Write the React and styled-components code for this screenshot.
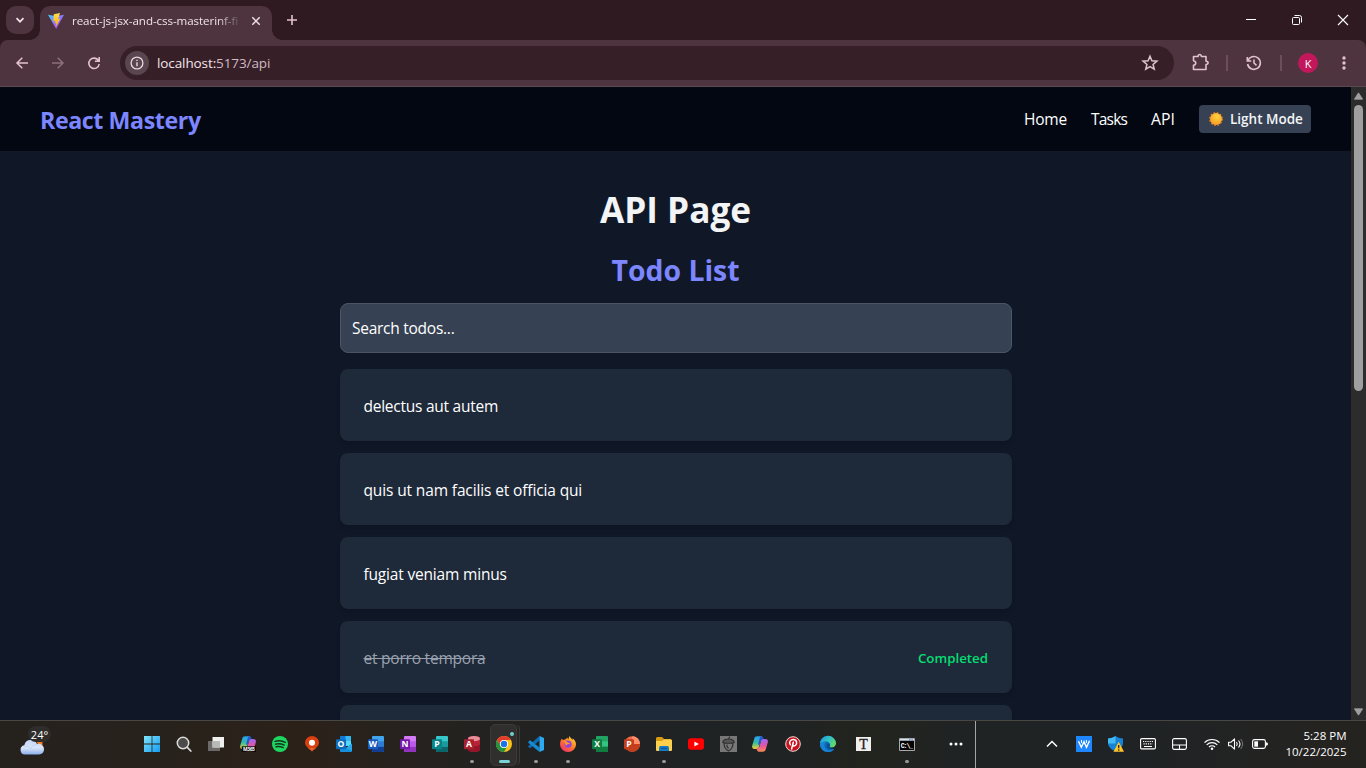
import React from "react";
import styled, { createGlobalStyle } from "styled-components";

const Global = createGlobalStyle`
  *{box-sizing:border-box}
  html,body,#root{margin:0;height:100%;overflow:hidden}
  body{font-family:"Open Sans","Noto Sans",sans-serif;background:#101828;color:#f3f4f6}
  svg{display:block;flex:none;overflow:visible}
`;

const Screen = styled.div`
  display: flex;
  flex-direction: column;
  width: 1366px;
  height: 768px;
`;

/* Text whose advance is tuned per label */
const Label = styled.span`
  display: block;
  white-space: nowrap;
  font-size: ${(p) => p.$size || 15.5}px;
  font-weight: ${(p) => p.$weight || 400};
  letter-spacing: ${(p) => p.$track || 0}px;
  color: ${(p) => p.$color || "inherit"};
`;

/* ---------- browser ---------- */
const TabStrip = styled.div`
  height: 40px;
  flex: none;
  display: flex;
  background: #2f1a22;
`;
const TabSearch = styled.div`
  width: 28px;
  height: 28px;
  margin: 6px 6px 0;
  border-radius: 10px;
  background: #4e343e;
  display: grid;
  place-items: center;
`;
const Tab = styled.div`
  position: relative;
  width: 232px;
  height: 34px;
  margin-top: 6px;
  padding: 0 10px 5px 8px;
  border-radius: 10px 10px 0 0;
  background: #4e343e;
  display: flex;
  align-items: center;
  &::before,
  &::after {
    content: "";
    position: absolute;
    bottom: 0;
    width: 10px;
    height: 10px;
  }
  &::before {
    left: -10px;
    background: radial-gradient(circle at 0 0, transparent 9.5px, #4e343e 10px);
  }
  &::after {
    right: -10px;
    background: radial-gradient(circle at 100% 0, transparent 9.5px, #4e343e 10px);
  }
`;
const TabTitle = styled.div`
  width: 168px;
  margin-left: 8px;
  margin-right: 10px;
  mask-image: linear-gradient(90deg, #000 145px, transparent 170px);
`;
const NewTab = styled.div`
  width: 40px;
  display: grid;
  place-items: center;
`;
const WindowButtons = styled.div`
  margin-left: auto;
  display: flex;
`;
const WindowButton = styled.div`
  width: 46px;
  display: grid;
  place-items: center;
`;
const Toolbar = styled.div`
  height: 47px;
  flex: none;
  display: flex;
  align-items: center;
  background: #4e343e;
  border-bottom: 1px solid #5c4850;
  border-radius: 8px 8px 0 0;
`;
const ToolbarWrap = styled.div`
  background: #2f1a22;
  flex: none;
`;
const ToolButton = styled.div`
  width: ${(p) => p.$w || 36}px;
  display: grid;
  place-items: center;
  opacity: ${(p) => (p.$dim ? 0.42 : 1)};
`;
const Omnibox = styled.div`
  width: 1054px;
  height: 34px;
  margin-left: 4px;
  border-radius: 17px;
  background: #371f28;
  display: flex;
  align-items: center;
  padding: 0 14px 0 5px;
  justify-content: space-between;
`;
const Address = styled.div`
  display: flex;
  align-items: center;
  gap: 8px;
`;
const Muted = styled.span`
  color: #cfbac2;
`;
const InfoChip = styled.div`
  width: 24px;
  height: 24px;
  border-radius: 50%;
  background: #5a464e;
  display: grid;
  place-items: center;
`;
const Separator = styled.div`
  width: 2px;
  height: 16px;
  background: #6d4f5a;
`;
const Avatar = styled.div`
  width: 20px;
  height: 20px;
  border-radius: 50%;
  background: #c2185b;
  color: #fff;
  font: 11px "Open Sans", sans-serif;
  display: grid;
  place-items: center;
`;

/* ---------- page ---------- */
const Viewport = styled.div`
  height: 633px;
  flex: none;
  display: flex;
  overflow: hidden;
`;
const Page = styled.main`
  width: 1351px;
  height: 633px;
  overflow: hidden;
  background: #101828;
`;
const Nav = styled.nav`
  height: 64px;
  padding: 0 40px;
  display: flex;
  align-items: center;
  justify-content: space-between;
  background: #030712;
`;
const Brand = styled(Label)`
  padding-top: 1px;
`;
const NavLinks = styled.div`
  display: flex;
  align-items: center;
  gap: 24px;
`;
const Link = styled.div`
  width: ${(p) => p.$w}px;
  color: #fff;
`;
const ThemeButton = styled.div`
  width: 112px;
  height: 28px;
  padding-left: 10px;
  display: flex;
  align-items: center;
  gap: 7px;
  border-radius: 4px;
  background: #364153;
`;
const Content = styled.section`
  width: 671px;
  margin: 0 auto;
  padding-top: 31px;
  display: flex;
  flex-direction: column;
`;
const Heading = styled.div`
  height: ${(p) => p.$h}px;
  margin-bottom: ${(p) => p.$mb}px;
  display: flex;
  align-items: center;
  justify-content: center;
`;
const SearchBox = styled.div`
  width: 672px;
  height: 50px;
  flex: none;
  margin-bottom: 16px;
  padding: 0 12px 0 11px;
  display: flex;
  align-items: center;
  border: 1px solid #4a5565;
  border-radius: 8px;
  background: #364153;
  color: #fff;
`;
const TodoList = styled.div`
  width: 672px;
  display: flex;
  flex-direction: column;
  gap: 12px;
  color: #fff;
`;
const TodoCard = styled.div`
  height: 72px;
  flex: none;
  padding: 1px 24px 0 23.5px;
  display: flex;
  align-items: center;
  justify-content: space-between;
  border-radius: 8px;
  background: #1e2939;
  box-shadow: 0 4px 6px -1px rgba(0, 0, 0, 0.1), 0 2px 4px -2px rgba(0, 0, 0, 0.1);
`;
const DoneLabel = styled(Label)`
  text-decoration: line-through;
  text-decoration-thickness: 1px;
`;
const Scrollbar = styled.div`
  width: 15px;
  padding: 5px 0 4px;
  display: flex;
  flex-direction: column;
  align-items: center;
  background: #2c2c2c;
`;
const Thumb = styled.div`
  width: 9px;
  height: 286px;
  margin-top: 5px;
  margin-bottom: auto;
  border-radius: 5px;
  background: #9f9f9f;
`;

/* ---------- taskbar ---------- */
const Taskbar = styled.footer`
  height: 48px;
  flex: none;
  display: flex;
  border-top: 1px solid #484744;
  background: linear-gradient(90deg, #25211d 0, #27221c 150px, #2b2119 300px, #25221f 430px, #202224 620px, #1f2324 780px, #22241d 870px, #202324 960px, #202325 1150px, #25231f 1366px);
`;
const Weather = styled.div`
  position: relative;
  width: 136px;
`;
const Cloud = styled.div`
  position: absolute;
  left: 20px;
  top: 18px;
`;
const Temp = styled.div`
  position: absolute;
  left: 28px;
  top: 5px;
  width: 23px;
  height: 16px;
  border-radius: 8px;
  background: #2e2d2b;
  display: grid;
  place-items: center;
`;
const Slot = styled.div`
  position: relative;
  width: ${(p) => p.$w || 32}px;
  padding-bottom: 1px;
  flex: none;
  display: grid;
  place-items: center;
`;
const MoreSlot = styled(Slot)`
  padding-left: 17px;
  justify-items: start;
`;
const ActiveTile = styled(Slot)`
  &::before {
    content: "";
    position: absolute;
    left: 2px;
    top: 3px;
    width: 25px;
    height: 40px;
    border-radius: 5px;
    border: 1px solid #3c3a38;
    background: #312f2d;
    box-shadow: 3px 0 0 -1px #272523, 4px 0 0 -1px #3c3a38;
  }
  &::after {
    content: "";
    position: absolute;
    left: 22px;
    top: 11px;
    width: 4px;
    height: 4px;
    border-radius: 50%;
    background: #70cfd3;
  }
  & > svg {
    position: relative;
  }
`;
const Indicator = styled.i`
  position: absolute;
  bottom: 5px;
  left: calc(50% - ${(p) => (p.$active ? 5 : 2)}px);
  width: ${(p) => (p.$active ? 11 : 4)}px;
  height: 3px;
  border-radius: 2px;
  background: ${(p) => (p.$active ? "#79d2d6" : "#9a9896")};
`;
const Divider = styled.div`
  width: 1px;
  background: #a5a5a4;
`;
const Tray = styled.div`
  display: flex;
  flex: 1;
  padding-left: 58px;
`;
const Clock = styled.div`
  margin-left: auto;
  padding: 7px 19.5px 0 0;
  display: flex;
  flex-direction: column;
  align-items: flex-end;
  line-height: 16px;
`;

function Icon({ s = 16, h, vb, children, ...rest }) {
  return (
    <svg width={s} height={h || s} viewBox={vb || `0 0 ${s} ${h || s}`} fill="none" {...rest}>
      {children}
    </svg>
  );
}
const pink = "#e3c1cd";

const ViteLogo = () => (
  <Icon>
    <defs>
      <linearGradient id="va" x1="0" y1="0" x2="1" y2="1">
        <stop stopColor="#41d1ff" />
        <stop offset=".7" stopColor="#a852fe" />
        <stop offset="1" stopColor="#bd34fe" />
      </linearGradient>
      <linearGradient id="vb" x1="0" y1="0" x2="0" y2="1">
        <stop stopColor="#ffdf50" />
        <stop offset="1" stopColor="#ffa800" />
      </linearGradient>
    </defs>
    <path d="M0 1.700 8 3.200l8-1.500L8.200 16Z" fill="url(#va)" />
    <path d="m12 0-6.200 1.200L5.300 8.300l2.200-.4-.700 2.600 1.400-.4-.6 4.400 4.700-9-2.100.4Z" fill="url(#vb)" />
  </Icon>
);

function OfficeIcon({ letter, back, mid, front, low, round }) {
  return (
    <Icon>
      {round ? (
        <>
          <circle cx="8.200" cy="8" r="7.800" fill={back} />
          <path d="M8.200 8V.2A7.800 7.800 0 0 1 16 8Z" fill={mid} />
          <path d="M.4 8H16A7.800 7.800 0 0 1 8.200 15.800 7.800 7.800 0 0 1 .4 8Z" fill={low} />
        </>
      ) : (
        <>
          <rect x="4" width="12" height="16" rx="1" fill={back} />
          <path d="M4 5.300h12v5.400H4Z" fill={mid} />
          <path d="M4 10.700h12V15q0 1-1 1H5q-1 0-1-1Z" fill={low} />
        </>
      )}
      <rect y="3.200" width="10" height="10" rx="1" fill={front} />
      <text x="5" y="11.300" textAnchor="middle" fill="#fff" fontFamily="Open Sans" fontWeight="700" fontSize="8.600">
        {letter}
      </text>
    </Icon>
  );
}

const AccessIcon = () => (
  <Icon>
    <path d="M4 2.500C4 1 6.500 0 10 0s6 1 6 2.500v11c0 1.500-2.500 2.500-6 2.500s-6-1-6-2.500Z" fill="#b72236" />
    <path d="M4 9c2 1.800 9 2 12-.5v5c0 1.500-2.500 2.500-6 2.500s-6-1-6-2.500Z" fill="#941528" />
    <ellipse cx="10" cy="2.700" rx="6" ry="2.600" fill="#e58f99" />
    <rect y="3.200" width="10" height="10" rx="1" fill="#a9202f" />
    <text x="5" y="11.300" textAnchor="middle" fill="#fff" fontFamily="Open Sans" fontWeight="700" fontSize="8.600">A</text>
  </Icon>
);

const Sun = () => (
  <Icon s={14}>
    <defs>
      <radialGradient id="sun" cx=".6" cy=".3" r=".75">
        <stop stopColor="#ffd23e" />
        <stop offset="1" stopColor="#f59a23" />
      </radialGradient>
    </defs>
    <circle cx="7" cy="7" r="6.300" fill="none" stroke="#e0752a" strokeWidth="1.400" strokeDasharray="1.700 1.600" />
    <circle cx="7" cy="7" r="6" fill="url(#sun)" />
  </Icon>
);

const CloudIcon = () => (
  <Icon s={25} h={16}>
    <defs>
      <linearGradient id="cl" x1="0" y1="0" x2="0" y2="1">
        <stop stopColor="#c4d7f7" />
        <stop offset=".55" stopColor="#d9e5f8" />
        <stop offset="1" stopColor="#8caeea" />
      </linearGradient>
    </defs>
    <path d="M17 3h5.500v3.500h-4Z" fill="#f57c1f" />
    <path d="M5 15.500a4.700 4.700 0 0 1-.7-9.300C5 3 7.200 .8 10.700 .8c3.300 0 5.300 1.700 6.300 4.200 4-.8 7 2 7 5.300 0 3-2 5.200-5 5.200Z" fill="url(#cl)" />
    <path d="M4.500 7.500c3-1 5 .5 6 2.500 1.500-3 4-5 7-4.500" stroke="#b9cff2" strokeWidth=".8" />
  </Icon>
);

const Windows = () => (
  <Icon>
    <defs>
      <linearGradient id="win" gradientUnits="userSpaceOnUse" x1="0" y1="0" x2="16" y2="16">
        <stop stopColor="#7ee5fb" />
        <stop offset="1" stopColor="#169cf0" />
      </linearGradient>
    </defs>
    <path d="M0 0h7.600v7.600H0ZM8.400 0H16v7.600H8.400ZM0 8.400h7.600V16H0ZM8.400 8.400H16V16H8.400Z" fill="url(#win)" />
  </Icon>
);
const SearchIcon = () => (
  <Icon>
    <circle cx="7" cy="7" r="5.700" fill="#4c4b49" stroke="#dcdcdc" strokeWidth="1.500" />
    <path d="m11.300 11.300 3.500 3.700" stroke="#d6d6d6" strokeWidth="1.800" strokeLinecap="round" />
  </Icon>
);
const TaskView = () => (
  <Icon>
    <path d="M0 5h12v10H0Z" fill="#6b6a69" />
    <path d="M4.500 1H16v10.500H4.500Z" fill="#efefef" />
    <path d="M4.500 5H12v6.500H4.500Z" fill="#b9b9b8" />
  </Icon>
);
const CopilotShape = ({ id }) => (
  <>
    <defs>
      <linearGradient id={id + "a"} x1="0" y1="0" x2="0" y2="1">
        <stop stopColor="#2b9cf0" />
        <stop offset=".5" stopColor="#32bda2" />
        <stop offset="1" stopColor="#f2ce32" />
      </linearGradient>
      <linearGradient id={id + "b"} x1="0" y1="0" x2="0" y2="1">
        <stop stopColor="#9e66f1" />
        <stop offset=".55" stopColor="#e755a0" />
        <stop offset="1" stopColor="#fa8a50" />
      </linearGradient>
    </defs>
    <path d="M11.600 4 11 2C10.700.9 10 .3 9 .3H5C3.500.3 2.700 1.200 2.300 2.500L.3 9.200C-.4 11.600.600 13 2.600 13h1.900c1.400 0 2.100-.8 2.500-2.200l1.300-4.600C8.700 4.700 9.400 4 10.700 4Z" fill={`url(#${id}a)`} />
    <path d="M9 .3c1 0 1.700.6 2 1.700l.6 2h-.9C9.400 4 8.700 4.700 8.300 6.200L7.600 8.700 6 8.500 7.800 2Z" fill="#2257cf" />
    <path d="M4.400 12 5 14c.3 1.100 1 1.700 2 1.700h4c1.500 0 2.300-.9 2.700-2.200l2-6.700c.7-2.400-.3-3.800-2.300-3.800h-1.900c-1.400 0-2.100.8-2.500 2.200l-1.300 4.600C7.300 11.300 6.600 12 5.300 12Z" fill={`url(#${id}b)`} />
  </>
);
const M365 = () => (
  <Icon>
    <CopilotShape id="m" />
    <path d="M1.800 10.300H16V15.800H1.800Z" fill="#080808" />
    <text x="8.900" y="14.800" textAnchor="middle" fontFamily="Open Sans" fontWeight="700" fontSize="4.900" fill="#fff" textLength="12">
      M365
    </text>
  </Icon>
);
const Spotify = () => (
  <Icon>
    <circle cx="8" cy="8" r="8" fill="#1ed760" />
    <path d="M3 5.300c3.500-1 7.500-.6 10.300 1M3.500 8.200c3-.9 6.200-.4 8.700.9M4 10.800c2.500-.6 5-.3 7.200.9" stroke="#17321e" strokeWidth="1.400" strokeLinecap="round" />
  </Icon>
);
const MapPin = () => (
  <Icon>
    <path d="M8 15.500C6.500 13 1 11 1 6.500a7 6.500 0 0 1 14 0C15 11 9.500 13 8 15.500Z" fill="#d9400f" />
    <path d="M8 15.500c-.7-1.200-2.500-2.300-4-3.500h8c-1.500 1.200-3.300 2.300-4 3.500Z" fill="#e8602f" />
    <circle cx="8" cy="6.800" r="3" fill="#fff" />
  </Icon>
);
const Outlook = () => (
  <Icon>
    <path d="M4 0h11v9H4Z" fill="#35b8f1" />
    <path d="M4 0h5.500v5H4Z" fill="#0f78d4" />
    <path d="M9.500 5H15v5H9.500Z" fill="#50d9ff" />
    <path d="M4 8l6 4 6-4.500V15q0 1-1 1H5q-1 0-1-1Z" fill="#1490df" />
    <path d="m10 12 6-4.500V15Z" fill="#28a8ea" />
    <rect y="3.200" width="10" height="10" rx="1" fill="#0f6cbd" />
    <text x="5" y="11.300" textAnchor="middle" fill="#fff" fontFamily="Open Sans" fontWeight="700" fontSize="8.600">O</text>
  </Icon>
);
const Chrome = () => (
  <Icon>
    <circle cx="8" cy="8" r="8" fill="#fbc116" />
    <path d="M1.070 4A8 8 0 0 1 14.930 4H8a4 4 0 0 0-3.500 6Z" fill="#e33b2e" />
    <path d="M1.070 4 4.540 10A4 4 0 0 0 11.460 10L8 16A8 8 0 0 1 1.070 4Z" fill="#229342" />
    <circle cx="8" cy="8" r="4" fill="#fff" />
    <circle cx="8" cy="8" r="3.200" fill="#1a73e8" />
  </Icon>
);
const VSCode = () => (
  <Icon>
    <path d="M11.500 0v4.600L2 12.300.300 11v-1Z" fill="#0a6db5" />
    <path d="M.300 5.700 2 4.200 11.500 11.500V16L.300 6.800Z" fill="#168bd2" />
    <path d="M11.500 0 16 2v12l-4.500 2Z" fill="#2cabf2" />
  </Icon>
);
const Firefox = () => (
  <Icon>
    <defs>
      <linearGradient id="ff" x1="1" y1="0" x2=".2" y2="1">
        <stop stopColor="#ffec42" />
        <stop offset=".45" stopColor="#ff8b24" />
        <stop offset="1" stopColor="#f42b68" />
      </linearGradient>
    </defs>
    <path d="M1.700 2.700 3 4.100l2-.5C6 3 6.500 2.700 7.200 1.500l1 2L9.500 0c.8 1.700 2 2.500 3.300 4L12.700 2.300C15 4 16 6.300 16 8.500a8 7.500 0 0 1-16 0C0 6 .8 4 1.700 2.700Z" fill="url(#ff)" />
    <circle cx="8" cy="8.200" r="3.600" fill="#9443d9" />
    <path d="M3.500 5.600c2-.7 3.700.1 4.500 1.200l2 .2c-.3 1.600-3.300.7-3.300 2.500-1.200-.3-1.800-1.400-1.500-2.600Z" fill="#ff9a26" />
  </Icon>
);
const Folder = () => (
  <Icon>
    <path d="M0 2.500Q0 1 1.500 1H6l2 2h7v6H0Z" fill="#d99b12" />
    <path d="M0 5h6l2-1.500h7q1 0 1 1V14q0 1-1 1H1q-1 0-1-1Z" fill="#ffd04b" />
    <path d="M3 15v-3.500Q3 10 4.500 10h7q1.500 0 1.500 1.500V15Z" fill="#157ac8" />
    <path d="M5 12.300h6" stroke="#074f8d" />
  </Icon>
);
const YouTube = () => (
  <Icon>
    <rect y="2.200" width="16" height="11.600" rx="2.800" fill="#f00" />
    <path d="m6.400 5.500 4.400 2.500-4.400 2.500Z" fill="#fff" />
  </Icon>
);
const Acorn = () => (
  <Icon s={17} h={16}>
    <path d="M0 0h17v16H0Z" fill="#777" />
    <path d="M2.800 6.300C3.200 3.800 5.500 3 8.500 3s5.300.8 5.700 3.300c-1 1.200-10.400 1.200-11.400 0Z" fill="#555" />
    <path d="M2.800 6.300C3.200 3.800 5.500 3 8.500 3s5.300.8 5.700 3.300c-1 1.200-10.400 1.200-11.400 0ZM4 7c0 4 1.500 6.500 4.500 8C11.500 13.500 13 11 13 7M8.500 3 9.800.6M7 8.500c-.3 1.500.3 3 1.500 4" stroke="#2c2c2c" strokeWidth="1.100" />
  </Icon>
);
const Copilot = () => (
  <Icon>
    <CopilotShape id="c" />
  </Icon>
);
const Pinterest = () => (
  <Icon>
    <circle cx="8" cy="8" r="7.300" fill="#c8141e" stroke="#f0d9da" strokeWidth="1" />
    <path d="M5.300 8.700C3.500 6 5.500 3.600 8.300 3.600c3.700 0 4.100 3.900 2.300 5.700-1 .9-2.500.8-2.800-.4M8.300 6.200 6.600 13" stroke="#fff" strokeWidth="1.500" strokeLinecap="round" />
  </Icon>
);
const Edge = () => (
  <Icon>
    <defs>
      <linearGradient id="eg" x1="0" y1=".2" x2="1" y2=".7">
        <stop stopColor="#1b9de2" />
        <stop offset=".55" stopColor="#37c6bd" />
        <stop offset="1" stopColor="#6bdc54" />
      </linearGradient>
    </defs>
    <circle cx="8" cy="8" r="8" fill="#0c66b4" />
    <path d="M0 8a8 8 0 0 1 16-.5c0 2.700-2 4-4 4-2 0-3-.8-2.200-1.600C11 8 9 5.500 6 5.500 3 5.500.500 7 0 8Z" fill="url(#eg)" />
    <path d="M6 6.200C3 8.500 5 14 9 14.200c2.500.1 4.500-.7 5.700-1.700A8 8 0 0 1 8 16C3.500 16 0 12.500 0 8c1-1.700 3.500-3 6-1.800Z" fill="#1683d4" />
    <path d="M9.800 9.900C9 10.700 10 11.500 12 11.500c1.500 0 3-.8 3.600-1.800l-1 2.900c-2 1.300-8 1-7.800-2.800.1-1.200.9-2 1.800-2.400 1.300.8 1.700 1.800 1.200 2.500Z" fill="#0b4f93" />
    <path d="M16 8.500v4l-1.500.3c-1 .2-3.500.2-4.800-.8 3 .5 5.300-.8 6.300-3.500Z" fill="#202324" />
  </Icon>
);
const Typewriter = () => (
  <Icon s={15} h={14}>
    <path d="M0 0h15v14H0Z" fill="#efefed" />
    <text x="7.500" y="11.700" textAnchor="middle" fontFamily="Liberation Serif" fontWeight="400" fontSize="14" fill="#202020" stroke="#202020" strokeWidth=".3">T</text>
  </Icon>
);
const Terminal = () => (
  <Icon s={16} h={13}>
    <path d="M.500 .500h15v12H.500Z" fill="#050505" stroke="#a8a8a8" />
    <path d="M1 1h14v1.700H1Z" fill="#d8e2ee" />
    <path d="M10 1.800h4" stroke="#4975b4" strokeDasharray="1 .6" />
    <text x="1.700" y="9.800" fontFamily="Liberation Mono" fontWeight="700" fontSize="6.500" fill="#fff" textLength="12.500">C:\_</text>
  </Icon>
);

const officeColors = {
  W: { back: "#41a5ee", mid: "#2b7cd3", low: "#103f91", front: "#185abd" },
  N: { back: "#d37af5", mid: "#b85bea", low: "#9332bf", front: "#7719aa" },
  P: { back: "#37c6c9", mid: "#1a9ba0", low: "#0b666c", front: "#078489" },
  X: { back: "#21a366", mid: "#33c481", low: "#107c41", front: "#107c41" },
};

const apps = [
  [Windows], [SearchIcon], [TaskView], [M365], [Spotify], [MapPin], [Outlook],
  [() => <OfficeIcon letter="W" {...officeColors.W} />],
  [() => <OfficeIcon letter="N" {...officeColors.N} />],
  [() => <OfficeIcon letter="P" {...officeColors.P} />],
  [AccessIcon, "run"],
  [Chrome, "active"], [VSCode, "run"], [Firefox, "run"],
  [() => <OfficeIcon letter="X" {...officeColors.X} />],
  [() => <OfficeIcon letter="P" round back="#ed6c47" mid="#ff8f6b" low="#c43e1c" front="#c43e1c" />],
  [Folder, "run"], [YouTube], [Acorn], [Copilot], [Pinterest, null, 34], [Edge, null, 35], [Typewriter, null, 36],
  [Terminal, "run", 51],
];

const todos = [
  { title: "delectus aut autem", track: -0.25 },
  { title: "quis ut nam facilis et officia qui", track: -0.13 },
  { title: "fugiat veniam minus", track: -0.18 },
  { title: "et porro tempora", track: -0.22, done: true },
  { title: "", track: 0 },
];

function Browser() {
  return (
    <>
      <TabStrip>
        <TabSearch>
          <Icon s={10}><path d="m1.500 3.200 3.500 3.500 3.500-3.500" stroke="#f3dfe6" strokeWidth="1.700" /></Icon>
        </TabSearch>
        <Tab>
          <ViteLogo />
          <TabTitle><Label $size={11.600} $color="#f1e2e7" $track={-0.08}>react-js-jsx-and-css-masterinf-fi</Label></TabTitle>
          <Icon s={12}><path d="m2.300 2.300 7.400 7.400m0-7.400L2.300 9.700" stroke="#f0dfe5" strokeWidth="1.500" /></Icon>
        </Tab>
        <NewTab><Icon s={12}><path d="M6 1v10M1 6h10" stroke={pink} strokeWidth="1.600" /></Icon></NewTab>
        <WindowButtons>
          <WindowButton><Icon s={10}><path d="M0 4.500h10" stroke="#fff" /></Icon></WindowButton>
          <WindowButton>
            <Icon s={10}><path d="M.500 3.500q0-1 1-1h5q1 0 1 1v5q0 1-1 1h-5q-1 0-1-1ZM2.500.500h5q2 0 2 2v5" stroke="#fff" /></Icon>
          </WindowButton>
          <WindowButton><Icon s={10}><path d="m0 0 10 10M10 0 0 10" stroke="#fff" strokeWidth="1.100" /></Icon></WindowButton>
        </WindowButtons>
      </TabStrip>
      <ToolbarWrap>
        <Toolbar>
          <ToolButton $w={44}><Icon s={12}><path d="M12 6H1M6.300.700 1 6l5.300 5.300" stroke={pink} strokeWidth="1.500" /></Icon></ToolButton>
          <ToolButton $w={28} $dim><Icon s={12}><path d="M0 6h11M5.700.700 11 6l-5.300 5.300" stroke={pink} strokeWidth="1.500" /></Icon></ToolButton>
          <ToolButton $w={44}>
            <Icon s={12}><path d="M10.500 3.600A5.200 5.200 0 1 0 11.200 7M11.200 0v4.300H6.900" stroke={pink} strokeWidth="1.600" /></Icon>
          </ToolButton>
          <Omnibox>
            <Address>
              <InfoChip>
                <Icon s={14}><circle cx="7" cy="7" r="5.900" stroke="#ead8de" strokeWidth="1.300" /><path d="M7 6.200v4M7 3.700v1.400" stroke="#ead8de" strokeWidth="1.400" /></Icon>
              </InfoChip>
              <Label $size={13.500} $track={-0.1} $color="#f3e4e9">localhost:<Muted>5173/api</Muted></Label>
            </Address>
            <Icon s={20} vb="0 0 24 24">
              <path d="m12 3.800 2.300 5.500 6 .5-4.600 3.900 1.400 5.800-5.100-3.100-5.100 3.100 1.400-5.800-4.600-3.900 6-.5Z" stroke="#dcc6ce" strokeWidth="1.800" />
            </Icon>
          </Omnibox>
          <ToolButton $w={52}>
            <Icon s={18}><path d="M2.500 2.500h4.600c0-2.700 3.300-2.700 3.300 0H15v4.700c2.800 0 2.800 3.300 0 3.300v5H2.500v-4.200c3-.600 3-4 0-4.600Z" stroke={pink} strokeWidth="1.600" strokeLinejoin="round" /></Icon>
          </ToolButton>
          <Separator />
          <ToolButton $w={52}>
            <Icon s={16}><path d="M1.300 2v4h4M1.800 6A6.400 6.400 0 1 1 1.600 9M8 4.500V8l2.500 2.300" stroke={pink} strokeWidth="1.600" /></Icon>
          </ToolButton>
          <Separator />
          <ToolButton $w={52}><Avatar>K</Avatar></ToolButton>
          <ToolButton $w={20}>
            <Icon s={4} h={14}><circle cx="2" cy="2" r="1.700" fill={pink} /><circle cx="2" cy="7" r="1.700" fill={pink} /><circle cx="2" cy="12" r="1.700" fill={pink} /></Icon>
          </ToolButton>
        </Toolbar>
      </ToolbarWrap>
    </>
  );
}

function ApiPage() {
  return (
    <Viewport>
      <Page>
        <Nav>
          <Brand $size={23.200} $weight={700} $track={-0.4} $color="#7c86ff">React Mastery</Brand>
          <NavLinks>
            <Link $w={43}><Label $track={-0.2}>Home</Label></Link>
            <Link $w={36}><Label $track={-0.8}>Tasks</Label></Link>
            <Link $w={24}><Label $size={15.800}>API</Label></Link>
            <ThemeButton>
              <Sun />
              <Label $size={13.500} $weight={650}>Light Mode</Label>
            </ThemeButton>
          </NavLinks>
        </Nav>
        <Content>
          <Heading $h={54} $mb={14}><Label $size={35.200} $weight={700}>API Page</Label></Heading>
          <Heading $h={40} $mb={13}><Label $size={28.400} $weight={700} $color="#7c86ff">Todo List</Label></Heading>
          <SearchBox><Label $track={-0.26}>Search todos...</Label></SearchBox>
          <TodoList>
            {todos.map((t, i) => (
              <TodoCard key={i}>
                {t.done ? <DoneLabel $color="#99a1af" $track={t.track}>{t.title}</DoneLabel> : <Label $track={t.track}>{t.title}</Label>}
                {t.done && <Label $size={13.300} $weight={640} $color="#05df72">Completed</Label>}
              </TodoCard>
            ))}
          </TodoList>
        </Content>
      </Page>
      <Scrollbar>
        <Icon s={9} h={8} vb="0 0 10 8"><path d="M5 .500 9.500 7.500H.500Z" fill="#9f9f9f" stroke="#9f9f9f" strokeLinejoin="round" /></Icon>
        <Thumb />
        <Icon s={9} h={8} vb="0 0 10 8"><path d="M.500.500h9L5 7.500Z" fill="#9f9f9f" stroke="#9f9f9f" strokeLinejoin="round" /></Icon>
      </Scrollbar>
    </Viewport>
  );
}

function SystemBar() {
  return (
    <Taskbar>
      <Weather>
        <Cloud><CloudIcon /></Cloud>
        <Temp><Label $size={11} $color="#fff">24°</Label></Temp>
      </Weather>
      {apps.map(([Glyph, state, w], i) => {
        const Tile = state === "active" ? ActiveTile : Slot;
        return (
          <Tile key={i} $w={w}>
            <Glyph />
            {state && <Indicator $active={state === "active"} />}
          </Tile>
        );
      })}
      <MoreSlot $w={43}>
        <Icon s={14} h={4}><circle cx="2" cy="2" r="1.500" fill="#fff" /><circle cx="7" cy="2" r="1.500" fill="#fff" /><circle cx="12" cy="2" r="1.500" fill="#fff" /></Icon>
      </MoreSlot>
      <Divider />
      <Tray>
        <Slot $w={36}><Icon s={10} h={6}><path d="m0 5.500 5-5 5 5" stroke="#fff" strokeWidth="1.500" /></Icon></Slot>
        <Slot $w={28}>
          <Icon><path d="M0 0h16v16H0Z" fill="#1e87ff" /><path d="m2.500 5.200 2.800 6L8 5.700l2.500 5.500 3-6.500" stroke="#fff" strokeWidth="1.400" /><path d="M5.500 4v3M10.400 4v3" stroke="#fff" /></Icon>
        </Slot>
        <Slot $w={36}>
          <Icon>
            <path d="M7.500 0C9.500 1.700 12 2.400 15 2.400V7c0 4-4 7-7.500 8.500C4 14 0 11 0 7V2.400c3 0 5.500-.7 7.500-2.400Z" fill="#1583d8" />
            <path d="M7.500 0v7.500H0V2.400c3 0 5.500-.7 7.500-2.400Z" fill="#45b9f3" />
            <path d="m10.700 5.700 5.300 10H5.500Z" fill="#ffc526" /><path d="M10.700 9v3.300m0 1v1.400" stroke="#222" strokeWidth="1.300" />
          </Icon>
        </Slot>
        <Slot $w={28}>
          <Icon s={16} h={12}><rect x=".600" y=".600" width="14.800" height="10.300" rx="1.200" stroke="#fff" strokeWidth="1.100" /><path d="M3 3.500h10M3.500 5.800h9" stroke="#fff" strokeWidth="1.200" strokeDasharray="1.200 1" /><path d="M4 8.500h8" stroke="#fff" /></Icon>
        </Slot>
        <Slot $w={35}>
          <Icon s={15} h={12}><rect x=".600" y=".600" width="13.800" height="10.800" rx="1.600" stroke="#fff" strokeWidth="1.100" /><path d="M.600 7h13.800M7.500 7v4.500" stroke="#fff" strokeWidth="1.100" /></Icon>
        </Slot>
        <Slot $w={30}>
          <Icon s={16} h={12}><path d="M.500 4.600a10.600 10.600 0 0 1 15 0M2.700 6.900a7.500 7.500 0 0 1 10.600 0M5 9a4.300 4.300 0 0 1 6 0" stroke="#fff" strokeWidth="1.200" /><circle cx="8" cy="10.700" r="1.300" fill="#fff" /></Icon>
        </Slot>
        <Slot $w={18}>
          <Icon s={16} h={12}><path d="M.600 4.200h2.500L6.500.900v10.200L3.100 7.800H.600Z" stroke="#fff" strokeWidth="1.100" strokeLinejoin="round" /><path d="M8.500 4q1.500 2 0 4M10.500 2.500q3 3.500 0 7" stroke="#fff" strokeWidth="1.100" /><path d="M12.700 1q4 5 0 10" stroke="#777" /></Icon>
        </Slot>
        <Slot $w={30}>
          <Icon s={16} h={10}><rect x=".600" y=".600" width="12.800" height="8.800" rx="1.800" stroke="#fff" strokeWidth="1.100" /><path d="M2.300 2.300h3.700v5.400H2.300Z" fill="#fff" /><path d="M14 3.200q2 0 2 1.800t-2 1.800Z" fill="#fff" /></Icon>
        </Slot>
        <Clock>
          <Label $size={11.500} $color="#fff">5:28 PM</Label>
          <Label $size={11.500} $color="#fff">10/22/2025</Label>
        </Clock>
      </Tray>
    </Taskbar>
  );
}

export default function App() {
  return (
    <Screen>
      <Global />
      <Browser />
      <ApiPage />
      <SystemBar />
    </Screen>
  );
}
